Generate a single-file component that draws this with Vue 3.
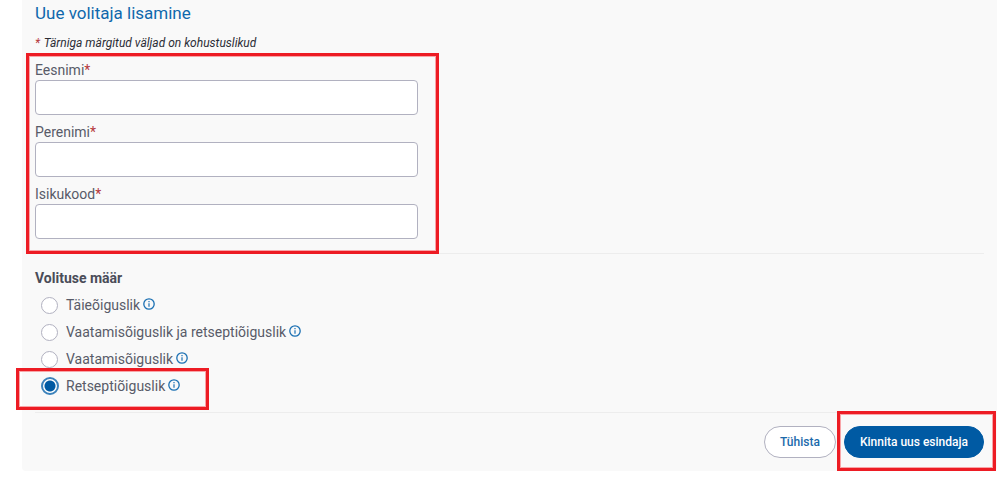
<script setup>
import { reactive, ref } from 'vue'

const fields = [
  { id: 'eesnimi', label: 'Eesnimi' },
  { id: 'perenimi', label: 'Perenimi' },
  { id: 'isikukood', label: 'Isikukood' },
]
const person = reactive({ eesnimi: '', perenimi: '', isikukood: '' })

const scopes = [
  { id: 'full', label: 'Täieõiguslik' },
  { id: 'view-rx', label: 'Vaatamisõiguslik ja retseptiõiguslik' },
  { id: 'view', label: 'Vaatamisõiguslik' },
  { id: 'rx', label: 'Retseptiõiguslik' },
]
const scope = ref('rx')
</script>

<template>
  <form class="card" @submit.prevent>
    <h1 class="title">Uue volitaja lisamine</h1>
    <p class="note"><span class="star">*</span> Tärniga märgitud väljad on kohustuslikud</p>

    <div class="fields marked">
      <div v-for="f in fields" :key="f.id" class="field">
        <label :for="f.id">{{ f.label }}<span class="star">*</span></label>
        <input :id="f.id" v-model="person[f.id]" type="text" required />
      </div>
    </div>

    <fieldset class="scopes">
      <legend>Volituse määr</legend>
      <div v-for="s in scopes" :key="s.id" class="scope" :class="{ marked: s.id === 'rx' }">
        <input :id="s.id" v-model="scope" type="radio" name="scope" :value="s.id" />
        <label :for="s.id">{{ s.label }}</label>
        <button type="button" class="info" :aria-label="'Info: ' + s.label">
          <svg viewBox="0 0 12 12" width="12" height="12" aria-hidden="true">
            <circle cx="6" cy="6" r="5.2" fill="none" stroke="currentColor" stroke-width="1.3" />
            <path d="M6 5.2V8.8M6 3.1V4.3" stroke="currentColor" stroke-width="1.2" />
          </svg>
        </button>
      </div>
    </fieldset>

    <div class="actions">
      <button type="button" class="btn">Tühista</button>
      <div class="confirm marked">
        <button type="submit" class="btn primary">Kinnita uus esindaja</button>
      </div>
    </div>
  </form>
</template>

<style>
body {
  background: #fff;
}
</style>

<style scoped>
.card {
  margin: 0 3px 0 22px;
  padding: 2px 13px 13px;
  background: #f9f9f9;
  border-radius: 0 0 4px 4px;
  color: #585b68;
  font: 14px/20px Roboto, "Liberation Sans", sans-serif;
}
.title {
  margin: 0;
  color: #0f68ac;
  font-size: 17px;
  font-weight: 400;
  line-height: 22px;
}
.note {
  margin: 11px 0 9px;
  color: #2b2d36;
  font-size: 12px;
  line-height: 16px;
  font-style: italic;
}
.star {
  color: #b5383c;
}
.note .star {
  margin-right: 1px;
}
.marked {
  position: relative;
}
.marked::after {
  content: "";
  position: absolute;
  border: 3px solid #ed1c24;
  outline: 1px solid #f8a5a8;
  outline-offset: -4px;
  pointer-events: none;
}
.fields {
  display: flex;
  flex-direction: column;
  gap: 7px;
  max-width: 383px;
}
.fields::after {
  inset: -7px -21px -15px -9px;
}
.field label {
  display: block;
}
.field input {
  display: block;
  box-sizing: border-box;
  width: 100%;
  height: 35px;
  padding: 0 10px;
  border: 1px solid #b1b1c0;
  border-radius: 4px;
  background: #fff;
  font: inherit;
}
.scopes {
  display: flex;
  flex-direction: column;
  gap: 7px;
  margin: 14px 0 0;
  padding: 15px 0 16px;
  border: 0;
  border-top: 1px solid #ededed;
  border-bottom: 1px solid #ededed;
}
.scopes legend {
  float: left;
  margin-bottom: 1px;
  padding: 0;
  color: #4a4c58;
  font-weight: 700;
  line-height: 18px;
}
.scope {
  display: flex;
  align-items: center;
  padding-left: 6px;
  width: fit-content;
}
.scope input {
  appearance: none;
  box-sizing: border-box;
  width: 17px;
  height: 17px;
  margin: 0 8px 0 0;
  border: 1px solid #b1b1c0;
  border-radius: 50%;
  background: #fff;
}
.scope input:checked {
  width: 18px;
  height: 18px;
  margin-right: 7px;
  border: 2px solid #3b82bb;
  background: radial-gradient(circle, #005aa3 5px, #fff 6px);
}
.scope.marked::after {
  inset: -8px -29px -14px -19px;
}
.info {
  display: flex;
  margin: 0 0 2px 3px;
  padding: 0;
  border: 0;
  background: none;
  color: #1b70b3;
}
.actions {
  display: flex;
  justify-content: flex-end;
  gap: 8px;
  padding-top: 13px;
}
.btn {
  height: 32px;
  padding: 0 15px;
  border: 1px solid #b1b1c0;
  border-radius: 16px;
  background: #fff;
  color: #1b6aab;
  font: 500 12px/16px Roboto, "Liberation Sans", sans-serif;
}
.primary {
  border-color: #005aa3;
  background: #005aa3;
  color: #fff;
}
.confirm::after {
  inset: -15px -12px -13px -7px;
}
</style>
